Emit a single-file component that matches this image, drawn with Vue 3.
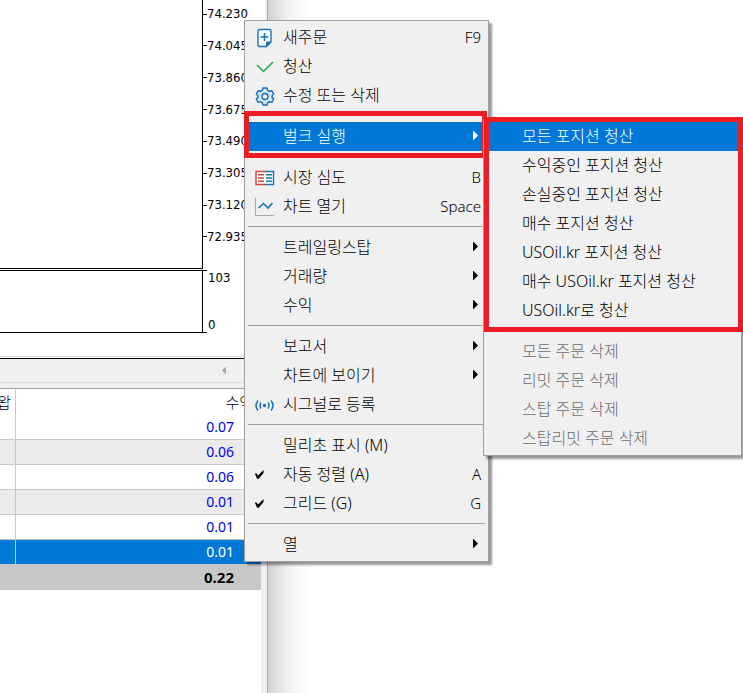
<template>
  <div class="desktop">
    <div class="terminal">
      <div class="chart">
        <div class="pane price-pane">
          <div class="plot"></div>
          <ul class="axis">
            <li v-for="price in prices" :key="price">{{ price }}</li>
          </ul>
        </div>
        <div class="pane indicator-pane">
          <div class="plot"></div>
          <ul class="axis">
            <li>103</li>
            <li>0</li>
          </ul>
        </div>
      </div>

      <div class="scrollbar">
        <button class="scroll-btn" aria-label="왼쪽으로"></button>
      </div>

      <table class="trades">
        <thead>
          <tr>
            <th class="swap">왑</th>
            <th class="profit">수익</th>
          </tr>
        </thead>
        <tbody>
          <tr v-for="trade in trades" :key="trade.id" :class="{ selected: trade.id === selectedId }">
            <td></td>
            <td class="profit">{{ trade.profit }}</td>
          </tr>
        </tbody>
        <tfoot>
          <tr>
            <td class="profit" colspan="2">0.22</td>
          </tr>
        </tfoot>
      </table>
    </div>
    <div class="backdrop"></div>

    <div class="menu main-menu">
      <div v-for="(group, index) in menuGroups" :key="index" class="menu-group">
        <button
          v-for="item in group"
          :key="item.label"
          class="menu-item"
          :class="{ active: item.label === openItem }"
        >
          <span class="icon">
            <svg v-if="item.icon === 'order'" width="20" height="20" viewBox="0 0 20 20" fill="none">
              <path d="M4.500 1.500h10a1.500 1.500 0 0 1 1.500 1.500v11l-4.500 4.500h-7A1.500 1.500 0 0 1 3 17V3A1.500 1.500 0 0 1 4.500 1.500z" fill="#fff" stroke="#1a6fb5" stroke-width="1.400" />
              <path d="M11.500 18.500V14H16z" fill="#1a6fb5" stroke="#1a6fb5" />
              <path d="M9.500 5v8M5.500 9h8" stroke="#1a6fb5" stroke-width="1.600" />
            </svg>
            <svg v-else-if="item.icon === 'check'" width="20" height="20" viewBox="0 0 20 20" fill="none">
              <path d="M2 8l6.500 6.500L18 5" stroke="#22a845" stroke-width="1.500" />
            </svg>
            <svg v-else-if="item.icon === 'gear'" width="20" height="20" viewBox="0 0 20 20" fill="none">
              <path d="M8 2h4l.7 2.400 1.600.9 2.500-.6 1.900 3.300L17 9.900v1.400l1.700 1.800-1.900 3.300-2.500-.6-1.600.9L12 19H8l-.7-2.300-1.600-.9-2.500.6-1.900-3.300L3 11.300V9.900L1.300 8l1.900-3.300 2.500.6 1.600-.9z" fill="#cde6f7" stroke="#1a6fb5" stroke-width="1.400" stroke-linejoin="round" />
              <circle cx="10" cy="10.500" r="3" fill="#f0f0f0" stroke="#1a6fb5" stroke-width="1.400" />
            </svg>
            <svg v-else-if="item.icon === 'depth'" width="20" height="20" viewBox="0 0 20 20" fill="none">
              <path d="M10 3.500H1v13h9" fill="#fff" stroke="#d9403a" stroke-width="1.400" />
              <path d="M10 3.500h8.500v13H10" fill="#fff" stroke="#1a6fb5" stroke-width="1.400" />
              <path d="M3 6.800h6M3 10h6M3 13.200h6" stroke="#d9403a" stroke-width="1.500" />
              <path d="M11 6.800h6M11 10h6M11 13.200h6" stroke="#1a6fb5" stroke-width="1.500" />
            </svg>
            <svg v-else-if="item.icon === 'chart'" width="20" height="20" viewBox="0 0 20 20" fill="none">
              <path d="M.5 1v17.500H19" stroke="#a8a8a8" />
              <path d="M3.500 11l5-4.500 4.500 4.500 4.500-5" stroke="#1a6fb5" stroke-width="1.600" />
            </svg>
            <svg v-else-if="item.icon === 'signal'" width="20" height="20" viewBox="0 0 20 20" fill="none" stroke="#1a6fb5" stroke-width="1.500">
              <circle cx="9.500" cy="10.500" r="1.700" fill="#1a6fb5" stroke="none" />
              <path d="M6 7.500q-2 3 0 6M13 7.500q2 3 0 6M3 5.500q-4 5 0 10M16 5.500q4 5 0 10" />
            </svg>
            <svg v-else-if="item.icon === 'tick'" width="10" height="10" viewBox="0 0 10 10">
              <path d="M0 4l1-1 2 2.500L8.500 0v3L3.500 9 2 8.500z" fill="#000" />
            </svg>
          </span>
          <span class="label">{{ item.label }}</span>
          <span v-if="item.shortcut" class="shortcut">{{ item.shortcut }}</span>
          <span v-if="item.sub" class="arrow"></span>
        </button>
      </div>
    </div>
    <div class="highlight main-highlight"></div>

    <div class="menu sub-menu">
      <div class="menu-group">
        <button
          v-for="label in closeActions"
          :key="label"
          class="menu-item"
          :class="{ active: label === closeActions[0] }"
        >
          <span class="label">{{ label }}</span>
        </button>
      </div>
      <div class="menu-group">
        <button v-for="label in deleteActions" :key="label" class="menu-item" disabled>
          <span class="label">{{ label }}</span>
        </button>
      </div>
    </div>
    <div class="highlight sub-highlight"></div>
  </div>
</template>

<script setup>
import { ref } from 'vue'

const prices = ['74.230', '74.045', '73.860', '73.675', '73.490', '73.305', '73.120', '72.935']

const trades = ref([
  { id: 1, profit: '0.07' },
  { id: 2, profit: '0.06' },
  { id: 3, profit: '0.06' },
  { id: 4, profit: '0.01' },
  { id: 5, profit: '0.01' },
  { id: 6, profit: '0.01' }
])
const selectedId = ref(6)

const openItem = ref('벌크 실행')

const menuGroups = [
  [
    { label: '새주문', icon: 'order', shortcut: 'F9' },
    { label: '청산', icon: 'check' },
    { label: '수정 또는 삭제', icon: 'gear' }
  ],
  [{ label: '벌크 실행', sub: true }],
  [
    { label: '시장 심도', icon: 'depth', shortcut: 'B' },
    { label: '차트 열기', icon: 'chart', shortcut: 'Space' }
  ],
  [
    { label: '트레일링스탑', sub: true },
    { label: '거래량', sub: true },
    { label: '수익', sub: true }
  ],
  [
    { label: '보고서', sub: true },
    { label: '차트에 보이기', sub: true },
    { label: '시그널로 등록', icon: 'signal' }
  ],
  [
    { label: '밀리초 표시 (M)' },
    { label: '자동 정렬 (A)', icon: 'tick', shortcut: 'A' },
    { label: '그리드 (G)', icon: 'tick', shortcut: 'G' }
  ],
  [{ label: '열', sub: true }]
]

const closeActions = [
  '모든 포지션 청산',
  '수익중인 포지션 청산',
  '손실중인 포지션 청산',
  '매수 포지션 청산',
  'USOil.kr 포지션 청산',
  '매수 USOil.kr 포지션 청산',
  'USOil.kr로 청산'
]

const deleteActions = ['모든 주문 삭제', '리밋 주문 삭제', '스탑 주문 삭제', '스탑리밋 주문 삭제']
</script>

<style>
body {
  margin: 0;
}
</style>

<style scoped>
.desktop {
  position: relative;
  display: flex;
  min-height: 100vh;
  overflow: hidden;
  background: #ffffff;
  color: #000000;
  font-family: "Noto Sans", "Noto Sans CJK KR", sans-serif;
  font-size: 15px;
}

.terminal {
  box-sizing: border-box;
  flex: 0 0 36%;
  min-width: 268px;
  border-right: 1px solid #a8a8a8;
  box-shadow: inset -6px 0 0 #f0f0f0;
}

.backdrop {
  flex: 1;
  background: linear-gradient(to right, #d2d2d2, #f4f4f4 22px, #ffffff 44px);
}

/* chart */
.chart {
  margin-right: 2px;
  padding-bottom: 23px;
  border-bottom: 1px solid #dcdcdc;
  background: #ffffff;
}

.pane {
  display: flex;
}

.plot {
  box-sizing: border-box;
  flex: 0 0 203px;
  border-right: 1px solid #000000;
  border-bottom: 1px solid #000000;
}

.indicator-pane {
  margin-top: 1px;
}

.indicator-pane .plot {
  border-top: 1px solid #000000;
}

.axis {
  display: flex;
  flex-direction: column;
  justify-content: space-between;
  margin: 0;
  padding: 0;
  list-style: none;
  font-family: "DejaVu Sans Condensed", "DejaVu Sans", sans-serif;
  font-size: 13px;
  line-height: 16px;
}

.price-pane .axis {
  height: 239px;
  padding: 6px 0 24px;
}

.price-pane li {
  display: flex;
  align-items: center;
}

.price-pane li::before {
  content: "";
  width: 4px;
  height: 1px;
  background: #000000;
}

.indicator-pane .axis {
  box-sizing: border-box;
  height: 63px;
}

.indicator-pane li {
  padding-left: 5px;
  background: linear-gradient(#000000, #000000) no-repeat left top / 4px 1px;
}

.indicator-pane li:last-child {
  background-position: left bottom;
}

.scrollbar {
  display: flex;
  justify-content: flex-end;
  align-items: center;
  height: 23px;
  padding-right: 41px;
  border-top: 1px solid #000000;
  border-bottom: 1px solid #dcdcdc;
  background: #f0f0f0;
  margin-top: 1px;
}

.scroll-btn {
  width: 4px;
  height: 8px;
  padding: 0;
  border: none;
  background: #a8a8a8;
  clip-path: polygon(100% 0, 100% 100%, 0 50%);
}

/* trades */
.trades {
  width: calc(100% - 6px);
  margin-top: 5px;
  border-top: 1px solid #a0a0a0;
  border-spacing: 0;
  table-layout: fixed;
  box-shadow: 0 -5px 0 #f0f0f0;
}

.trades th,
.trades td {
  box-sizing: border-box;
  height: 25px;
  padding: 0;
  border-bottom: 1px solid #c8c8c8;
  line-height: 20px;
}

.trades th {
  height: 26px;
  border-bottom: none;
  font-weight: 300;
}

.trades th:first-child,
.trades tbody td:first-child {
  width: 16px;
  border-right: 1px solid #c8c8c8;
}

.trades .swap {
  padding-right: 5px;
  direction: rtl;
  white-space: nowrap;
}

.trades .profit {
  padding-right: 27px;
  text-align: right;
}

.trades th.profit {
  padding-right: 8px;
}

.trades tbody .profit {
  color: #0000f0;
  font-size: 14px;
}

.trades tbody tr:nth-child(even) {
  background: #ebebeb;
}

.trades tbody tr.selected {
  background: #0078d7;
}

.trades tbody tr.selected .profit {
  color: #ffffff;
}

.trades tfoot td {
  background: #c8c8c8;
  font-weight: 700;
}

/* menus */
.menu {
  position: absolute;
  box-sizing: border-box;
  padding: 2px;
  border: 1px solid #a0a0a0;
  background: #f0f0f0;
  box-shadow: 3px 3px 2px rgba(0, 0, 0, 0.4);
}

.main-menu {
  top: 20px;
  left: 244px;
  width: 245px;
}

.sub-menu {
  top: 119px;
  left: 483px;
  right: 2px;
  border-right: none;
}

.menu-group + .menu-group::before {
  content: "";
  display: block;
  height: 1px;
  margin: 5px 1px 6px;
  background: #a0a0a0;
}

.menu-item {
  display: flex;
  align-items: center;
  width: 100%;
  height: 29px;
  padding: 0 5px 0 8px;
  border: none;
  background: transparent;
  color: #000000;
  font: inherit;
  font-size: 16px;
  font-weight: 300;
  line-height: 29px;
  text-align: left;
  white-space: nowrap;
}

.menu-item.active {
  background: #0078d7;
  color: #ffffff;
}

.menu-item:disabled {
  color: #6d6d6d;
}

.sub-menu .menu-item {
  padding-left: 36px;
}

.icon {
  display: flex;
  align-items: center;
  flex: 0 0 20px;
  height: 20px;
  margin-right: 8px;
}

.label {
  flex: 1;
}

.shortcut {
  font-size: 15px;
}

.arrow {
  width: 5px;
  height: 10px;
  margin: 0 3px 2px 0;
  background: currentColor;
  clip-path: polygon(0 0, 100% 50%, 0 100%);
}

.highlight {
  position: absolute;
  box-sizing: border-box;
  border: 5px solid #ec1c24;
  pointer-events: none;
}

.main-highlight {
  top: 111px;
  left: 244px;
  width: 243px;
  height: 47px;
}

.sub-highlight {
  top: 117px;
  left: 484px;
  right: 0;
  height: 215px;
}
</style>
